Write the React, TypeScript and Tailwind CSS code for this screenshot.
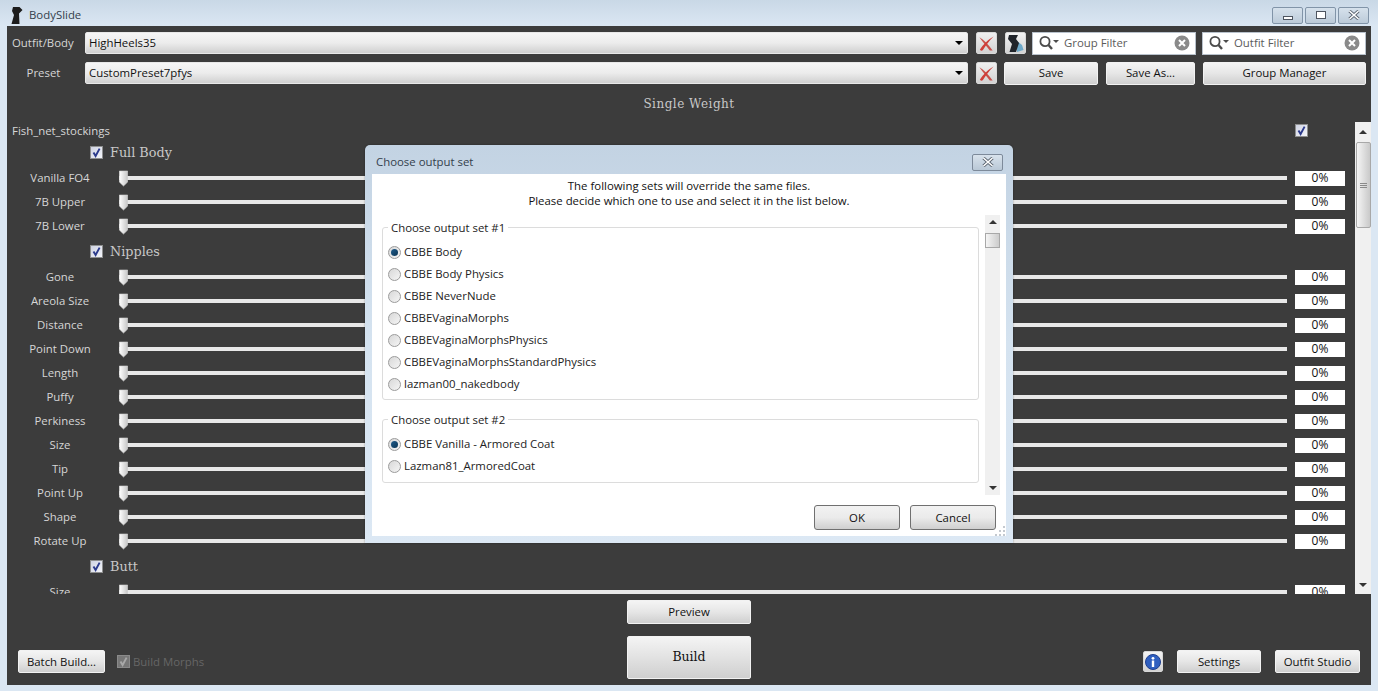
const sans = "font-['Open_Sans',sans-serif]";

const groups = [
  { name: 'Full Body', sliders: ['Vanilla FO4', '7B Upper', '7B Lower'] },
  {
    name: 'Nipples',
    sliders: ['Gone', 'Areola Size', 'Distance', 'Point Down', 'Length', 'Puffy', 'Perkiness', 'Size', 'Tip', 'Point Up', 'Shape', 'Rotate Up'],
  },
  { name: 'Butt', sliders: ['Size'] },
];

const firstSets = ['CBBE Body', 'CBBE Body Physics', 'CBBE NeverNude', 'CBBEVaginaMorphs', 'CBBEVaginaMorphsPhysics', 'CBBEVaginaMorphsStandardPhysics', 'lazman00_nakedbody'];
const secondSets = ['CBBE Vanilla - Armored Coat', 'Lazman81_ArmoredCoat'];

function Check({ disabled = false }: { disabled?: boolean }) {
  return (
    <span className={`flex h-[13px] w-[13px] shrink-0 items-center justify-center border ${disabled ? 'border-[#8a8a8a] bg-[#777777]' : 'border-[#8e8f8f] bg-gradient-to-br from-[#cfd3e2] to-[#f4f5fa]'}`}>
      <svg viewBox="0 0 11 11" className="h-[11px] w-[11px]">
        <path d="M2.5 5.5 L4.6 9 L8.6 1.6" fill="none" stroke={disabled ? '#a8a8a8' : '#2b3a8c'} strokeWidth="1.9" />
      </svg>
    </span>
  );
}

function WinButton({ label, className }: { label: string; className: string }) {
  return (
    <button className={`flex items-center justify-center rounded-[2px] border border-[#f2f2f2] bg-gradient-to-b from-[#f4f4f4] via-[#e6e6e6] to-[#cfcfcf] text-[11.4px] text-[#111111] ${sans} ${className}`}>
      {label}
    </button>
  );
}

function RedX() {
  return (
    <button className="flex h-[22px] w-[21px] shrink-0 items-center justify-center rounded-[2px] border border-[#d8d8d8] bg-gradient-to-b from-[#f0f0f0] to-[#d2d2d2]">
      <svg viewBox="0 0 18 18" className="h-[17px] w-[17px]">
        <path d="M1.5 2.5 C6 5 11 10 15.5 16.5 L12.5 16.5 C9 12 5 7.5 1.5 2.5 Z" fill="#c9504a" />
        <path d="M16.5 1.5 C11 4.5 5.5 10 2 15.5 C3 16.8 4.2 16.8 5.2 16 C8 11 12 6 16.5 1.5 Z" fill="#cf3f3a" />
      </svg>
    </button>
  );
}

function Combo({ value, className }: { value: string; className: string }) {
  return (
    <div className={`flex items-center rounded-[2px] border border-[#e8e8e8] bg-gradient-to-b from-[#f6f6f6] via-[#ececec] to-[#d0d0d0] pl-[3px] pr-[4px] text-[11.4px] text-[#111111] ${sans} ${className}`}>
      <span className="flex-1">{value}</span>
      <span className="h-0 w-0 border-x-[4px] border-t-[4px] border-x-transparent border-t-black" />
    </div>
  );
}

function Filter({ label, className }: { label: string; className: string }) {
  return (
    <div className={`flex h-[23px] w-[164px] items-center border border-[#b9c2cc] bg-white pl-[5px] pr-[5px] ${className}`}>
      <svg viewBox="0 0 24 16" className="h-[16px] w-[24px] shrink-0">
        <circle cx="7" cy="6.5" r="4.6" fill="none" stroke="#4c4c4c" strokeWidth="1.8" />
        <path d="M10.5 10 L14 14" stroke="#4c4c4c" strokeWidth="2.4" />
        <path d="M15 5 H21 L18 8 Z" fill="#4c4c4c" />
      </svg>
      <span className={`ml-[2px] flex-1 text-[11.4px] text-[#5b5b5b] ${sans}`}>{label}</span>
      <svg viewBox="0 0 16 16" className="h-[16px] w-[16px] shrink-0">
        <circle cx="8" cy="8" r="7.5" fill="#8a8a8a" />
        <path d="M5 5 L11 11 M11 5 L5 11" stroke="white" strokeWidth="2" />
      </svg>
    </div>
  );
}

function SliderRow({ label }: { label: string }) {
  return (
    <div className="flex h-[24px] items-center">
      <span className={`w-[96px] shrink-0 pb-[1px] text-center text-[11.4px] text-[#d6d6d6] ${sans}`}>{label}</span>
      <div className="relative ml-[11px] flex h-[16px] w-[1168px] shrink-0 items-center">
        <div className="h-[4px] w-full bg-[#e8e8e8]" />
        <svg viewBox="0 0 9 17" className="absolute left-0 top-0 h-[17px] w-[9px]">
          <defs>
            <linearGradient id="thumb" x1="0" y1="0" x2="1" y2="0">
              <stop offset="0" stopColor="#ffffff" />
              <stop offset="1" stopColor="#c6c6c6" />
            </linearGradient>
          </defs>
          <path d="M0.3 1 H8.7 V12 L4.5 16 L0.3 12 Z" fill="url(#thumb)" stroke="#d0d0d0" strokeWidth="0.6" />
        </svg>
      </div>
      <span className={`ml-[8px] flex h-[15px] w-[50px] shrink-0 items-center justify-center bg-white text-[12px] text-[#111111] ${sans}`}>0%</span>
    </div>
  );
}

function Radio({ label, checked }: { label: string; checked?: boolean }) {
  return (
    <div className="flex h-[22px] items-center gap-[3px]">
      <span className="flex h-[13px] w-[13px] items-center justify-center rounded-full border border-[#9b9b9b] bg-gradient-to-br from-[#d8d8d8] to-[#f5f5f5]">
        {checked && <span className="h-[7px] w-[7px] rounded-full bg-gradient-to-br from-[#1f5c8c] to-[#0c3554]" />}
      </span>
      <span className={`text-[11.4px] text-[#222222] ${sans}`}>{label}</span>
    </div>
  );
}

function RadioGroup({ title, items, className }: { title: string; items: string[]; className: string }) {
  return (
    <fieldset className={`w-[597px] rounded-[3px] border border-[#dcdcdc] pl-[5px] ${className}`}>
      <legend className={`ml-0 px-[3px] pt-[1px] text-[11.4px] leading-[14px] text-[#222222] ${sans}`}>{title}</legend>
      <div className="pt-[6px]">
        {items.map((s, i) => (
          <Radio key={s} label={s} checked={i === 0} />
        ))}
      </div>
    </fieldset>
  );
}

function CloseGlyph() {
  return (
    <svg viewBox="0 0 12 10" className="h-[10px] w-[12px]">
      <path d="M1.5 1 L10.5 9 M10.5 1 L1.5 9" stroke="#56606c" strokeWidth="3.2" />
      <path d="M1.5 1 L10.5 9 M10.5 1 L1.5 9" stroke="#ffffff" strokeWidth="1.6" />
    </svg>
  );
}

function DialogButton({ label }: { label: string }) {
  return (
    <button className={`h-[25px] w-[86px] rounded-[3px] border border-[#707070] bg-gradient-to-b from-[#f2f2f2] via-[#ebebeb] to-[#cfcfcf] text-[11.4px] text-[#111111] ${sans}`}>{label}</button>
  );
}

function Dialog() {
  return (
    <div className="absolute left-[365px] top-[145px] flex h-[398px] w-[648px] flex-col rounded-t-[5px] bg-gradient-to-b from-[#c3d3e3] via-[#d5e3f0] to-[#dce8f4] shadow-[0_0_2px_rgba(0,0,0,0.4)]">
      <div className="flex h-[29px] shrink-0 items-center pl-[11px] pr-[10px] pt-[5px]">
        <span className={`flex-1 text-[11.4px] text-[#33404c] ${sans}`}>Choose output set</span>
        <button className="flex h-[17px] w-[31px] items-center justify-center rounded-[2px] border border-[#7d8a9a] bg-gradient-to-b from-[#d8e2ec] to-[#b9c8d6]">
          <CloseGlyph />
        </button>
      </div>
      <div className="relative mx-[7px] h-[362px] bg-white">
        <p className={`pt-[4px] text-center text-[11.4px] leading-[15px] text-[#111111] ${sans}`}>
          The following sets will override the same files.
          <br />
          Please decide which one to use and select it in the list below.
        </p>
        <div className="mt-[7px] flex h-[280px] pl-[10px]">
          <div className="w-[597px] pt-[5px]">
            <RadioGroup title="Choose output set #1" items={firstSets} className="h-[180px]" />
            <RadioGroup title="Choose output set #2" items={secondSets} className="mt-[12px] h-[71px]" />
          </div>
          <div className="ml-[6px] flex w-[15px] flex-col items-center bg-[#f0f0f0]">
            <span className="mt-[5px] h-0 w-0 border-x-[4px] border-b-[4px] border-x-transparent border-b-[#333333]" />
            <span className="mt-[9px] h-[15px] w-[15px] border border-[#a8a8a8] bg-gradient-to-r from-[#f5f5f5] to-[#cccccc]" />
            <span className="mb-[5px] mt-auto h-0 w-0 border-x-[4px] border-t-[4px] border-x-transparent border-t-[#333333]" />
          </div>
        </div>
        <div className="mt-[10px] flex justify-end gap-[10px] pr-[10px]">
          <DialogButton label="OK" />
          <DialogButton label="Cancel" />
        </div>
        <svg viewBox="0 0 12 12" className="absolute bottom-0 right-0 h-[12px] w-[12px]">
          <path d="M9 2h2v2H9zM5 6h2v2H5zM9 6h2v2H9zM1 10h2v2H1zM5 10h2v2H5zM9 10h2v2H9z" fill="#c4c9cf" />
        </svg>
      </div>
    </div>
  );
}

export default function App() {
  return (
    <div className="relative flex h-[691px] w-[1378px] flex-col overflow-hidden bg-[#dbe7f3]">
      <div className="flex h-[26px] shrink-0 items-center bg-gradient-to-b from-[#c9d8e6] to-[#dbe7f3] pl-[11px] pr-[9px] pt-[4px]">
        <svg viewBox="0 0 12 17" className="h-[17px] w-[12px]">
          <path d="M2 0 H8.5 L11.5 3 L8 6.5 L8.5 17 H0.5 L3 8 L1 4 Z" fill="#1d1d1d" />
        </svg>
        <span className={`ml-[6px] flex-1 text-[11.4px] text-[#33404c] ${sans}`}>BodySlide</span>
        <div className="flex gap-[2px]">
          <span className="flex h-[17px] w-[31px] items-center justify-center rounded-[2px] border border-[#8194a8] bg-gradient-to-b from-[#d6e1ec] to-[#bccbd9] pt-[5px]">
            <span className="h-[4px] w-[10px] border border-[#4e5560] bg-white" />
          </span>
          <span className="flex h-[17px] w-[31px] items-center justify-center rounded-[2px] border border-[#8194a8] bg-gradient-to-b from-[#d6e1ec] to-[#bccbd9]">
            <span className="h-[8px] w-[10px] border border-[#4e5560] bg-white" />
          </span>
          <span className="flex h-[17px] w-[31px] items-center justify-center rounded-[2px] border border-[#8194a8] bg-gradient-to-b from-[#d6e1ec] to-[#bccbd9]">
            <CloseGlyph />
          </span>
        </div>
      </div>

      <div className="mx-[7px] flex h-[659px] w-[1364px] flex-col bg-[#3c3c3c]">
        <div className="mt-[5px] flex h-[24px] items-center">
          <span className={`w-[78px] shrink-0 pl-[5px] text-[11.4px] text-[#d6d6d6] ${sans}`}>Outfit/Body</span>
          <Combo value="HighHeels35" className="h-[22px] w-[883px]" />
          <span className="ml-[8px]"><RedX /></span>
          <button className="ml-[8px] flex h-[22px] w-[21px] shrink-0 items-center justify-center rounded-[2px] border border-[#d8d8d8] bg-gradient-to-b from-[#f4f4f4] to-[#d2d2d2]">
            <svg viewBox="0 0 17 19" className="h-[19px] w-[17px]">
              <path d="M10 7 L15 11 L16.5 16 L10 18 Z" fill="#6ea9c9" />
              <path d="M2 1 H11 L9 5 L12 9 L11 12 L9 18 H2.5 L5 10 L1 5 Z" fill="#20242a" />
            </svg>
          </button>
          <Filter label="Group Filter" className="ml-[6px]" />
          <Filter label="Outfit Filter" className="ml-[6px]" />
        </div>
        <div className="mt-[6px] flex h-[24px] items-center">
          <span className={`w-[78px] shrink-0 pr-[5px] text-center text-[11.4px] text-[#d6d6d6] ${sans}`}>Preset</span>
          <Combo value="CustomPreset7pfys" className="h-[22px] w-[883px]" />
          <span className="ml-[8px]"><RedX /></span>
          <WinButton label="Save" className="ml-[7px] h-[23px] w-[94px]" />
          <WinButton label="Save As..." className="ml-[8px] h-[23px] w-[89px]" />
          <WinButton label="Group Manager" className="ml-[8px] h-[23px] w-[163px]" />
        </div>
        <div className="mt-[8px] flex h-[22px] items-center justify-center font-['DejaVu_Serif',serif] text-[12px] tracking-[0.5px] text-[#c8c8c8]">Single Weight</div>
        <div className="mt-[7px] flex h-[472px] overflow-hidden">
          <div className="w-[1348px] shrink-0 overflow-hidden pl-[5px]">
            <div className="flex h-[17px] items-center justify-between pr-[47px]">
              <span className={`text-[11.4px] text-[#d6d6d6] ${sans}`}>Fish_net_stockings</span>
              <Check />
            </div>
            {groups.map((g) => (
              <div key={g.name}>
                <div className="mb-[2px] mt-[1px] flex h-[24px] items-center pl-[78px]">
                  <Check />
                  <span className="ml-[7px] pt-[1px] font-['DejaVu_Serif',serif] text-[12.8px] text-[#c8c8c8]">{g.name}</span>
                </div>
                {g.sliders.map((s) => (
                  <SliderRow key={g.name + s} label={s} />
                ))}
              </div>
            ))}
          </div>
          <div className="flex w-[16px] flex-col items-center bg-[#f0f0f0]">
            <span className="mt-[8px] h-0 w-0 border-x-[4px] border-b-[4px] border-x-transparent border-b-[#333333]" />
            <span className="mt-[8px] flex h-[86px] w-[15px] flex-col items-center justify-center gap-[1px] rounded-[2px] border border-[#a8a8a8] bg-gradient-to-r from-[#f5f5f5] to-[#c9c9c9]">
              <span className="h-[1px] w-[7px] bg-[#8a8a8a]" />
              <span className="h-[1px] w-[7px] bg-[#8a8a8a]" />
              <span className="h-[1px] w-[7px] bg-[#8a8a8a]" />
            </span>
            <span className="mb-[7px] mt-auto h-0 w-0 border-x-[4px] border-t-[4px] border-x-transparent border-t-[#333333]" />
          </div>
        </div>

        <div className="grid flex-1 grid-cols-[620px_124px_620px] items-end pb-[6px]">
          <div className="flex items-center pb-[6px] pl-[11px]">
            <WinButton label="Batch Build..." className="h-[23px] w-[87px]" />
            <span className="ml-[12px]"><Check disabled /></span>
            <span className={`ml-[3px] text-[11.4px] text-[#666666] ${sans}`}>Build Morphs</span>
          </div>
          <div className="flex flex-col gap-[12px]">
            <WinButton label="Preview" className="h-[24px] w-[124px]" />
            <button className="h-[43px] w-[124px] rounded-[2px] border border-[#f2f2f2] bg-gradient-to-b from-[#f4f4f4] via-[#e2e2e2] to-[#cfcfcf] font-['DejaVu_Serif',serif] text-[12.5px] text-[#111111]">Build</button>
          </div>
          <div className="flex items-center justify-end gap-[14px] pb-[6px] pr-[11px]">
            <button className="flex h-[21px] w-[20px] items-center justify-center rounded-[2px] border border-[#d8d8d8] bg-gradient-to-b from-[#f4f4f4] to-[#d2d2d2]">
              <svg viewBox="0 0 16 16" className="h-[16px] w-[16px]">
                <circle cx="8" cy="8" r="7.5" fill="#2f5fc0" stroke="#1f3f8f" />
                <circle cx="8" cy="4.3" r="1.4" fill="white" />
                <rect x="6.8" y="6.5" width="2.4" height="6.5" fill="white" />
              </svg>
            </button>
            <WinButton label="Settings" className="h-[23px] w-[84px]" />
            <WinButton label="Outfit Studio" className="h-[23px] w-[85px]" />
          </div>
        </div>
      </div>

      <Dialog />
    </div>
  );
}
